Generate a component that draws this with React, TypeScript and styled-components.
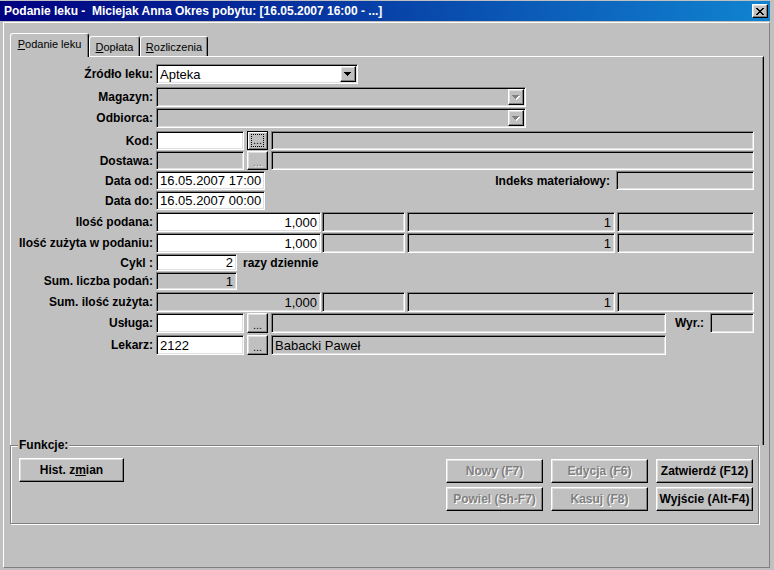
import React from "react";
import styled, {createGlobalStyle, css} from "styled-components";

const GlobalStyle = createGlobalStyle`
  html, body {
    margin: 0;
    padding: 0;
    background: #c0c0c0;
  }
  body {
    font-family: "Liberation Sans", Arial, sans-serif;
    color: #000;
  }
  * {
    box-sizing: border-box;
  }
`;

// classic win9x bevels
const sunken = css`
  border: 1px solid;
  border-color: #808080 #fff #fff #808080;
  box-shadow: inset 1px 1px 0 #000, inset -1px -1px 0 #dfdfdf;
`;

const raised = css`
  border: 1px solid;
  border-color: #fff #000 #000 #fff;
  box-shadow: inset -1px -1px 0 #808080, inset 1px 1px 0 #dfdfdf;
`;

const Window = styled.div`
  width: 774px;
  height: 570px;
  padding: 1px 4px 1px 0;
  display: flex;
  flex-direction: column;
  background: #c0c0c0;
`;

const TitleBar = styled.div`
  height: 20px;
  flex-shrink: 0;
  display: flex;
  align-items: center;
  justify-content: space-between;
  padding: 0 2px 0 4px;
  background: linear-gradient(to right, #000080, #1084d0);
`;

const TitleText = styled.span`
  color: #fff;
  font-weight: bold;
  font-size: 12px;
  white-space: pre;
`;

const CloseButton = styled.div`
  ${raised};
  width: 16px;
  height: 14px;
  background: #c0c0c0;
  display: flex;
  align-items: center;
  justify-content: center;
`;

const Client = styled.div`
  flex: 1;
  margin: 1px 0 1px 3px;
  border-top: 1px solid #fff;
  border-left: 1px solid #fff;
  border-right: 1px solid #808080;
  border-bottom: 1px solid #808080;
  padding: 10px 5px 0 6px;
  display: flex;
  flex-direction: column;
`;

const TabStrip = styled.div`
  display: flex;
  align-items: flex-end;
  height: 23px;
`;

const Tab = styled.div<{ $active?: boolean, $w: number }>`
  width: ${p => p.$w}px;
  height: ${p => p.$active ? 24 : 20}px;
  margin-bottom: ${p => p.$active ? -1 : 0}px;
  padding-bottom: ${p => p.$active ? 3 : 0}px;
  background: #c0c0c0;
  border: 1px solid;
  border-bottom: none;
  border-color: #fff #000 transparent #fff;
  border-radius: 3px 3px 0 0;
  box-shadow: inset -1px 0 0 #808080;
  font-size: 11px;
  display: flex;
  align-items: center;
  justify-content: center;
  position: relative;
  z-index: ${p => p.$active ? 1 : 0};
`;

const TabPanel = styled.div`
  width: 754px;
  height: 389px;
  flex-shrink: 0;
  border-top: 1px solid #fff;
  border-left: 1px solid #fff;
  border-right: 1px solid #000;
  box-shadow: inset -1px 0 0 #808080;
  padding: 7px 9px 0 0;
  display: flex;
  flex-direction: column;
`;

const Row = styled.div<{ $h: number, $mt: number }>`
  display: flex;
  align-items: center;
  height: ${p => p.$h}px;
  margin-top: ${p => p.$mt}px;
`;

const Label = styled.div`
  width: 142px;
  flex-shrink: 0;
  text-align: right;
  font-size: 12px;
  font-weight: bold;
  white-space: nowrap;
`;

const InlineLabel = styled.div<{ $ml?: number }>`
  margin-left: ${p => p.$ml ?? 0}px;
  font-size: 12px;
  font-weight: bold;
  white-space: nowrap;
`;

const Spacer = styled.div`
  flex: 1;
`;

const Field = styled.div<{ $w?: number, $ro?: boolean, $right?: boolean, $ml?: number }>`
  ${sunken};
  ${p => p.$w ? `width: ${p.$w}px; flex-shrink: 0;` : 'flex: 1;'}
  height: 100%;
  margin-left: ${p => p.$ml ?? 3}px;
  background: ${p => p.$ro ? '#c0c0c0' : '#fff'};
  font-size: 13px;
  line-height: 1;
  padding: 0 3px;
  display: flex;
  align-items: center;
  justify-content: ${p => p.$right ? 'flex-end' : 'flex-start'};
  white-space: nowrap;
  overflow: hidden;
`;

const Combo = styled.div<{ $w: number, $disabled?: boolean }>`
  ${sunken};
  width: ${p => p.$w}px;
  height: 100%;
  margin-left: 3px;
  background: ${p => p.$disabled ? '#c0c0c0' : '#fff'};
  display: flex;
  align-items: center;
  justify-content: space-between;
  padding: 0 1px 0 3px;
  font-size: 13px;
`;

const ComboArrow = styled.div`
  ${raised};
  width: 16px;
  height: 16px;
  background: #c0c0c0;
  display: flex;
  align-items: center;
  justify-content: center;
`;

const DotsButton = styled.div<{ $default?: boolean, $disabled?: boolean }>`
  ${raised};
  ${p => p.$default && css`
    border: 1px solid #000;
    box-shadow: inset 1px 1px 0 #fff, inset -1px -1px 0 #808080;
  `}
  width: 21px;
  height: 100%;
  margin-left: 3px;
  flex-shrink: 0;
  background: #c0c0c0;
  display: flex;
  align-items: center;
  justify-content: center;
  font-size: 11px;
  color: ${p => p.$disabled ? '#808080' : '#000'};
  text-shadow: ${p => p.$disabled ? '1px 1px 0 #fff' : 'none'};
`;

const DotsText = styled.span`
  line-height: 1;
  margin-top: 4px;
`;

const FocusRect = styled.span`
  width: 13px;
  height: 13px;
  border: 1px dotted #000;
  display: flex;
  align-items: flex-end;
  justify-content: center;
  line-height: 1;
  font-size: 11px;
`;

const GroupBox = styled.div`
  position: relative;
  width: 749px;
  height: 79px;
  flex-shrink: 0;
  border: 1px solid #808080;
  box-shadow: inset 1px 1px 0 #fff, 1px 1px 0 #fff;
  padding: 12px 5px 0 8px;
  display: flex;
  justify-content: space-between;
  align-items: flex-start;
`;

const Legend = styled.span`
  position: absolute;
  left: 7px;
  top: -8px;
  padding: 0 1px;
  background: #c0c0c0;
  font-size: 12px;
  font-weight: bold;
`;

const Button = styled.div<{ $w?: number, $disabled?: boolean }>`
  ${raised};
  width: ${p => p.$w ?? 97}px;
  height: 24px;
  background: #c0c0c0;
  display: flex;
  align-items: center;
  justify-content: center;
  font-size: 12px;
  font-weight: bold;
  white-space: nowrap;
  color: ${p => p.$disabled ? '#808080' : '#000'};
  text-shadow: ${p => p.$disabled ? '1px 1px 0 #fff' : 'none'};
`;

const ButtonGrid = styled.div`
  display: grid;
  grid-template-columns: repeat(3, 97px);
  column-gap: 8px;
  row-gap: 4px;
  margin-top: 1px;
`;

const Arrow = ({disabled}: { disabled?: boolean }) => (
    <svg width="8" height="5" viewBox="0 0 8 5" shapeRendering="crispEdges">
        {disabled && <path d="M1 1h7v1H1zM2 2h5v1H2zM3 3h3v1H3zM4 4h1v1H4z" fill="#fff"/>}
        <path d="M0 0h7v1H0zM1 1h5v1H1zM2 2h3v1H2zM3 3h1v1H3z" fill={disabled ? '#808080' : '#000'}/>
    </svg>
);

const CloseGlyph = () => (
    <svg width="8" height="7" viewBox="0 0 8 7" shapeRendering="crispEdges">
        <path
            d="M0 0h2v1H0zM6 0h2v1H6zM1 1h2v1H1zM5 1h2v1H5zM2 2h4v1H2zM3 3h2v1H3zM2 4h4v1H2zM1 5h2v1H1zM5 5h2v1H5zM0 6h2v1H0zM6 6h2v1H6z"
            fill="#000"/>
    </svg>
);

type QtyRow = { label: string, qty: string, count: string, editable: boolean, mt: number };

const qtyRows: QtyRow[] = [
    {label: 'Ilość podana:', qty: '1,000', count: '1', editable: true, mt: 2},
    {label: 'Ilość zużyta w podaniu:', qty: '1,000', count: '1', editable: true, mt: 1},
];

const QuantityRow = ({row}: { row: QtyRow }) => (
    <Row $h={20} $mt={row.mt}>
        <Label>{row.label}</Label>
        <Field $w={165} $right $ro={!row.editable}>{row.qty}</Field>
        <Field $w={83} $ro $ml={1}/>
        <Field $w={208} $ro $right $ml={2}>{row.count}</Field>
        <Field $ro $ml={2}/>
    </Row>
);

export default function App() {
    return (
        <>
            <GlobalStyle/>
            <Window>
                <TitleBar>
                    <TitleText>Podanie leku -  Miciejak Anna Okres pobytu: [16.05.2007 16:00 - ...]</TitleText>
                    <CloseButton><CloseGlyph/></CloseButton>
                </TitleBar>
                <Client>
                    <TabStrip>
                        <Tab $active $w={79}><span><u>P</u>odanie leku</span></Tab>
                        <Tab $w={51}><span><u>D</u>opłata</span></Tab>
                        <Tab $w={68}><span><u>R</u>ozliczenia</span></Tab>
                    </TabStrip>
                    <TabPanel>
                        <Row $h={20} $mt={0}>
                            <Label>Źródło leku:</Label>
                            <Combo $w={202}>
                                <span>Apteka</span>
                                <ComboArrow><Arrow/></ComboArrow>
                            </Combo>
                        </Row>
                        <Row $h={20} $mt={3}>
                            <Label>Magazyn:</Label>
                            <Combo $w={370} $disabled>
                                <span/>
                                <ComboArrow><Arrow disabled/></ComboArrow>
                            </Combo>
                        </Row>
                        <Row $h={20} $mt={1}>
                            <Label>Odbiorca:</Label>
                            <Combo $w={370} $disabled>
                                <span/>
                                <ComboArrow><Arrow disabled/></ComboArrow>
                            </Combo>
                        </Row>
                        <Row $h={19} $mt={3}>
                            <Label>Kod:</Label>
                            <Field $w={88}/>
                            <DotsButton $default><FocusRect>...</FocusRect></DotsButton>
                            <Field $ro/>
                        </Row>
                        <Row $h={19} $mt={1}>
                            <Label>Dostawa:</Label>
                            <Field $w={88} $ro/>
                            <DotsButton $disabled><DotsText>...</DotsText></DotsButton>
                            <Field $ro/>
                        </Row>
                        <Row $h={19} $mt={1}>
                            <Label>Data od:</Label>
                            <Field $w={109}>16.05.2007 17:00</Field>
                            <Spacer/>
                            <InlineLabel>Indeks materiałowy:</InlineLabel>
                            <Field $w={138} $ro $ml={6}/>
                        </Row>
                        <Row $h={19} $mt={1}>
                            <Label>Data do:</Label>
                            <Field $w={109}>16.05.2007 00:00</Field>
                        </Row>
                        {qtyRows.map(r => <QuantityRow key={r.label} row={r}/>)}
                        <Row $h={17} $mt={1}>
                            <Label>Cykl :</Label>
                            <Field $w={81} $right>2</Field>
                            <InlineLabel $ml={6}>razy dziennie</InlineLabel>
                        </Row>
                        <Row $h={18} $mt={1}>
                            <Label>Sum. liczba podań:</Label>
                            <Field $w={81} $ro $right>1</Field>
                        </Row>
                        <QuantityRow row={{label: 'Sum. ilość zużyta:', qty: '1,000', count: '1', editable: false, mt: 2}}/>
                        <Row $h={20} $mt={1}>
                            <Label>Usługa:</Label>
                            <Field $w={88}/>
                            <DotsButton><DotsText>...</DotsText></DotsButton>
                            <Field $w={395} $ro/>
                            <Spacer/>
                            <InlineLabel>Wyr.:</InlineLabel>
                            <Field $w={44} $ro $ml={6}/>
                        </Row>
                        <Row $h={20} $mt={2}>
                            <Label>Lekarz:</Label>
                            <Field $w={88}>2122</Field>
                            <DotsButton><DotsText>...</DotsText></DotsButton>
                            <Field $w={395} $ro>Babacki Paweł</Field>
                        </Row>
                    </TabPanel>
                    <GroupBox>
                        <Legend>Funkcje:</Legend>
                        <Button $w={105}><span>Hist. z<u>m</u>ian</span></Button>
                        <ButtonGrid>
                            <Button $disabled>Nowy (F7)</Button>
                            <Button $disabled>Edycja (F6)</Button>
                            <Button>Zatwierdź (F12)</Button>
                            <Button $disabled>Powiel (Sh-F7)</Button>
                            <Button $disabled>Kasuj (F8)</Button>
                            <Button>Wyjście (Alt-F4)</Button>
                        </ButtonGrid>
                    </GroupBox>
                </Client>
            </Window>
        </>
    );
}
